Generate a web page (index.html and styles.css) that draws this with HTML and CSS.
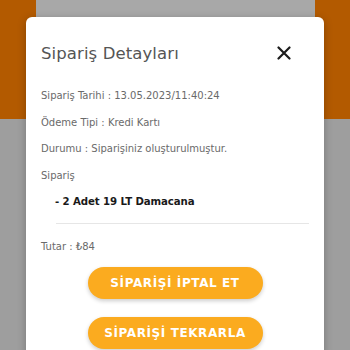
FILE: index.html
```html
<!DOCTYPE html>
<html>
<head>
<meta charset="utf-8">
<link rel="stylesheet" href="styles.css">
</head>
<body>
<div class="page">
  <div class="header">
    <div class="behind-card"></div>
  </div>
  <div class="content"></div>
</div>
<div class="modal">
  <div class="modal-head">
    <div class="title">Sipariş Detayları</div>
    <svg class="close" width="14" height="14" viewBox="0 0 14 14"><path d="M1.5 1.5L12.5 12.5M12.5 1.5L1.5 12.5" stroke="#1c1c1c" stroke-width="2.2" stroke-linecap="round"/></svg>
  </div>
  <div class="rows">
    <div class="row">Sipariş Tarihi : 13.05.2023/11:40:24</div>
    <div class="row">Ödeme Tipi : Kredi Kartı</div>
    <div class="row">Durumu : Siparişiniz oluşturulmuştur.</div>
    <div class="row">Sipariş</div>
    <div class="item">- 2 Adet 19 LT Damacana</div>
  </div>
  <div class="divider"></div>
  <div class="row total">Tutar : ₺84</div>
  <div class="actions">
    <button class="btn">SİPARİŞİ İPTAL ET</button>
    <button class="btn">SİPARİŞİ TEKRARLA</button>
  </div>
</div>
</body>
</html>
```
FILE: styles.css
```css
* { box-sizing: border-box; }
html, body { margin: 0; padding: 0; width: 350px; height: 350px; overflow: hidden; }
body { font-family: "DejaVu Sans", sans-serif; background: #9e9e9e; position: relative; }
.page { display: flex; flex-direction: column; height: 350px; }
.header { height: 119px; background: #b35a00; display: flex; justify-content: center; }
.behind-card { width: 279px; height: 40px; background: #a8a8a8; }
.content { flex: 1; background: #9e9e9e; }
.modal {
  position: absolute; left: 26px; top: 17px; width: 298px; height: 340px;
  background: #fff; border-radius: 6px; padding: 0 15px;
  box-shadow: 0 2px 8px rgba(0,0,0,0.25);
}
.modal-head { display: flex; align-items: center; justify-content: space-between; height: 66px; padding: 6px 18px 0 0; }
.title { font-size: 16.5px; color: #555; letter-spacing: 0.1px; }
.close { display: block; }
.rows { display: flex; flex-direction: column; }
.row { font-size: 10px; color: #6a6a6a; height: 26.6px; line-height: 26.6px; }
.item { font-size: 10.2px; font-weight: bold; color: #1a1a1a; padding-left: 14px; height: 26px; line-height: 26px; letter-spacing: -0.1px; }
.divider { height: 1px; background: #e6e6e6; margin: 8px 0 0 15px; }
.total { margin-top: 10px; }
.actions { display: flex; flex-direction: column; align-items: center; gap: 18px; margin-top: 6px; }
.btn {
  width: 175px; height: 32px; border: none; border-radius: 16px; background: #fbab1f;
  color: #fff; font-family: "DejaVu Sans", sans-serif; font-weight: bold; font-size: 12px;
  letter-spacing: 0.6px; box-shadow: 0 2px 4px rgba(0,0,0,0.2); padding: 0;
}
```
